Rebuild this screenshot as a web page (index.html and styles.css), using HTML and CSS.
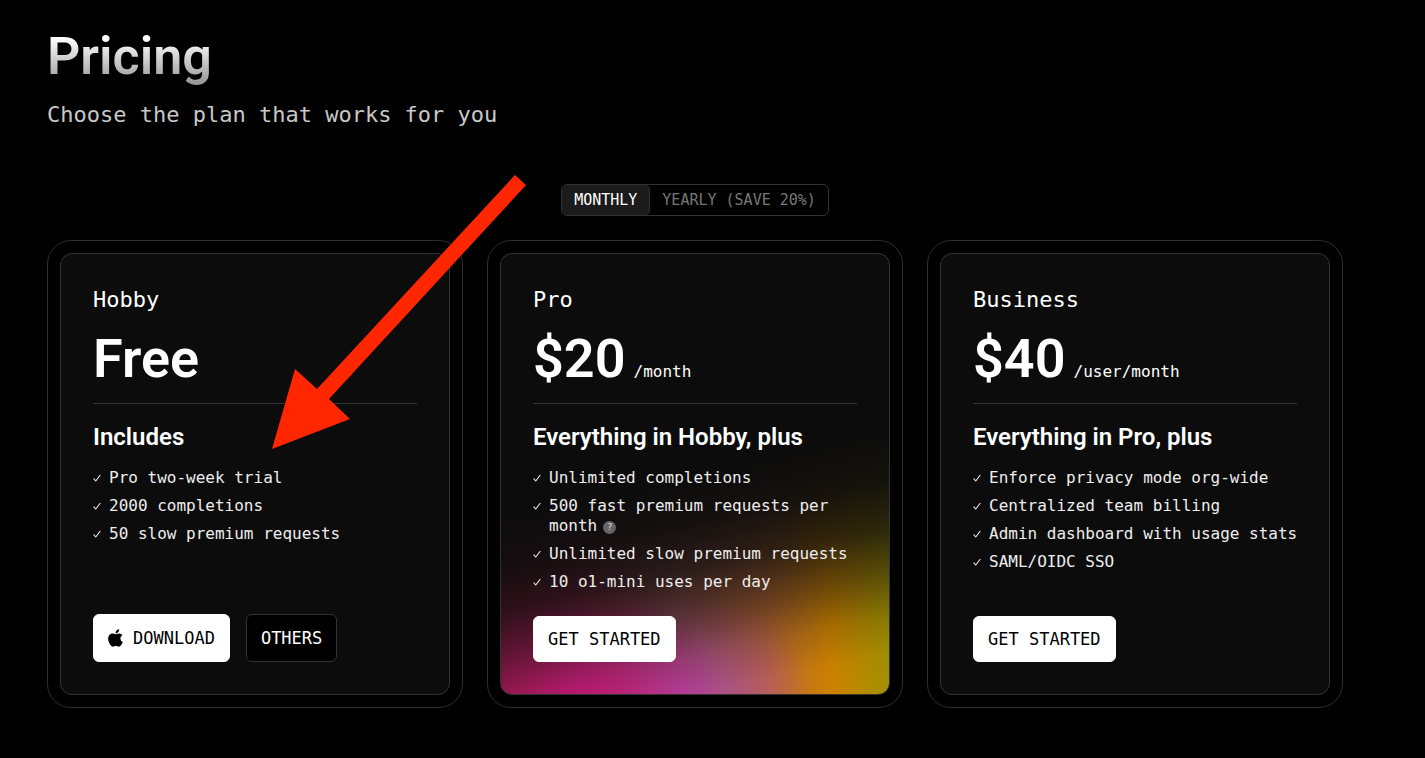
FILE: index.html
```
<!DOCTYPE html>
<html lang="en">
<head>
    <meta charset="UTF-8">
    <meta name="viewport" content="width=device-width, initial-scale=1.0">
    <title>Pricing</title>
    <link rel="stylesheet" href="styles.css">
</head>
<body>
    <!-- shared check icon -->
    <svg class="sprite" aria-hidden="true">
        <symbol id="check" viewBox="0 0 8 8">
            <path d="M0.6 4.6 L2.8 7 L7.3 1" fill="none" stroke="currentColor" stroke-width="1.1"/>
        </symbol>
    </svg>

    <main class="page">
        <header class="page-header">
            <h1>Pricing</h1>
            <p>Choose the plan that works for you</p>
        </header>

        <div class="toggle">
            <button type="button" class="active">MONTHLY</button>
            <button type="button">YEARLY (SAVE 20%)</button>
        </div>

        <div class="plans">
            <section class="plan">
                <div class="plan-inner">
                    <h2>Hobby</h2>
                    <div class="price"><strong>Free</strong></div>
                    <hr>
                    <h3>Includes</h3>
                    <ul>
                        <li><svg class="check"><use href="#check"/></svg><span>Pro two-week trial</span></li>
                        <li><svg class="check"><use href="#check"/></svg><span>2000 completions</span></li>
                        <li><svg class="check"><use href="#check"/></svg><span>50 slow premium requests</span></li>
                    </ul>
                    <div class="actions">
                        <button type="button" class="btn btn-tall">
                            <svg class="apple" viewBox="0 26 384 460" aria-hidden="true"><path d="M318.7 268.7c-.2-36.7 16.4-64.4 50-84.8-18.8-26.9-47.2-41.7-84.7-44.6-35.5-2.8-74.3 20.7-88.5 20.7-15 0-49.4-19.7-76.4-19.7C63.3 141.2 4 184.8 4 273.5q0 39.3 14.4 81.2c12.8 36.7 59 126.7 107.2 125.2 25.2-.6 43-17.9 75.8-17.9 31.8 0 48.3 17.9 76.4 17.9 48.6-.7 90.4-82.5 102.6-119.3-65.2-30.7-61.7-90-61.7-91.9zm-56.6-164.2c27.3-32.4 24.8-61.9 24-72.5-24.1 1.4-52 16.4-67.9 34.9-17.5 19.8-27.8 44.3-25.6 71.9 26.1 2 49.9-11.4 69.5-34.3z"/></svg>
                            DOWNLOAD
                        </button>
                        <button type="button" class="btn btn-tall btn-dark">OTHERS</button>
                    </div>
                </div>
            </section>

            <section class="plan">
                <div class="plan-inner plan-glow">
                    <h2>Pro</h2>
                    <div class="price"><strong>$20</strong><span>/month</span></div>
                    <hr>
                    <h3>Everything in Hobby, plus</h3>
                    <ul>
                        <li><svg class="check"><use href="#check"/></svg><span>Unlimited completions</span></li>
                        <li><svg class="check"><use href="#check"/></svg><span>500 fast premium requests per month<button type="button" class="help">?</button></span></li>
                        <li><svg class="check"><use href="#check"/></svg><span>Unlimited slow premium requests</span></li>
                        <li><svg class="check"><use href="#check"/></svg><span>10 o1-mini uses per day</span></li>
                    </ul>
                    <div class="actions">
                        <button type="button" class="btn">GET STARTED</button>
                    </div>
                </div>
            </section>

            <section class="plan">
                <div class="plan-inner">
                    <h2>Business</h2>
                    <div class="price"><strong>$40</strong><span>/user/month</span></div>
                    <hr>
                    <h3>Everything in Pro, plus</h3>
                    <ul>
                        <li><svg class="check"><use href="#check"/></svg><span>Enforce privacy mode org-wide</span></li>
                        <li><svg class="check"><use href="#check"/></svg><span>Centralized team billing</span></li>
                        <li><svg class="check"><use href="#check"/></svg><span>Admin dashboard with usage stats</span></li>
                        <li><svg class="check"><use href="#check"/></svg><span>SAML/OIDC SSO</span></li>
                    </ul>
                    <div class="actions">
                        <button type="button" class="btn">GET STARTED</button>
                    </div>
                </div>
            </section>
        </div>
    </main>

    <!-- arrow pointing at the Hobby plan -->
    <svg class="arrow" viewBox="0 0 256 276" aria-hidden="true">
        <polygon points="1,275 24,195 46,215 244,1 255,11 58,225 79,245" fill="#ff2600"/>
    </svg>
</body>
</html>
```
FILE: styles.css
```
* {
    box-sizing: border-box;
}
body {
    margin: 0;
    background: #000;
    color: #fff;
    font-family: "DejaVu Sans Mono", monospace;
    font-size: 16px;
    line-height: 20px;
}
h1, h2, h3, p, ul {
    margin: 0;
    padding: 0;
}
button {
    font-family: inherit;
    cursor: pointer;
}
.sprite {
    display: none;
}
.page {
    max-width: 1390px;
    padding: 25px 47px 48px;
}
.page-header h1 {
    width: fit-content;
    font: 600 52px/64px Roboto, sans-serif;
    background: linear-gradient(#fff 20%, #999 90%);
    -webkit-background-clip: text;
    background-clip: text;
    color: transparent;
}
.page-header p {
    margin-top: 12px;
    font-size: 22px;
    line-height: 28px;
    color: #c8c8c8;
}

/* monthly / yearly switch */
.toggle {
    display: flex;
    width: fit-content;
    margin: 55px auto 24px;
    border: 1px solid #333;
    border-radius: 6px;
}
.toggle button {
    padding: 0 12px;
    border: 0;
    background: none;
    color: #777;
    font-size: 15px;
    line-height: 30px;
}
.toggle .active {
    border-right: 1px solid #333;
    border-radius: 5px;
    background: #1b1b1b;
    color: #fff;
}

/* plan cards */
.plans {
    display: grid;
    grid-template-columns: repeat(3, 1fr);
    gap: 24px;
}
.plan {
    display: flex;
    padding: 12px;
    border: 1px solid #2e2e2e;
    border-radius: 24px;
}
.plan-inner {
    flex: 1;
    display: flex;
    flex-direction: column;
    padding: 32px;
    border: 1px solid #333;
    border-radius: 12px;
    background: #0c0c0c;
}
.plan-glow {
    background:
        linear-gradient(-12deg, transparent 0%, rgba(12, 12, 12, 0.04) 8%, rgba(12, 12, 12, 0.2) 15%, rgba(12, 12, 12, 0.5) 23%, rgba(12, 12, 12, 0.8) 32%, rgba(12, 12, 12, 0.95) 41%, #0c0c0c 50%),
        radial-gradient(36% 28% at 22% 102%, #d81a84, rgba(216, 26, 132, 0)),
        radial-gradient(34% 26% at 46% 102%, #b04cb0, rgba(176, 76, 176, 0)),
        linear-gradient(88deg, #a81c48 0%, #a82c4c 20%, #a45a54 42%, #c06a34 66%, #d08400 82%, #989600 100%);
}
.plan h2 {
    font-size: 22px;
    font-weight: 400;
    line-height: 28px;
}
.price {
    display: flex;
    align-items: baseline;
    gap: 8px;
    margin-top: 12px;
}
.price strong {
    font: 600 54px/66px Roboto, sans-serif;
}
.plan hr {
    width: 100%;
    height: 1px;
    margin: 11px 0 17px;
    border: 0;
    background: #333;
}
.plan h3 {
    font: 600 24px/32px Roboto, sans-serif;
}
.plan ul {
    display: grid;
    gap: 8px;
    margin: 15px -8px 24px 0;
    list-style: none;
    color: #eee;
}
.plan li {
    display: flex;
    gap: 8px;
}
.check {
    flex: none;
    width: 8px;
    height: 8px;
    margin-top: 6px;
}
.help {
    width: 13px;
    height: 13px;
    margin-left: 6px;
    padding: 0;
    border: 0;
    border-radius: 50%;
    background: #666;
    color: #ddd;
    font-size: 9px;
    line-height: 13px;
    text-align: center;
    vertical-align: 1px;
}
.actions {
    display: flex;
    gap: 16px;
    margin-top: auto;
}
.btn {
    display: flex;
    align-items: center;
    gap: 10px;
    padding: 0 14px;
    border: 1px solid #fff;
    border-radius: 6px;
    background: #fff;
    color: #000;
    font-size: 17px;
    line-height: 44px;
}
.btn-tall {
    line-height: 46px;
}
.btn-dark {
    border-color: #333;
    background: #000;
    color: #fff;
}
.apple {
    width: 15px;
    height: 18px;
}

.arrow {
    position: absolute;
    top: 174px;
    left: 271px;
    width: 256px;
    height: 276px;
    pointer-events: none;
}
```
